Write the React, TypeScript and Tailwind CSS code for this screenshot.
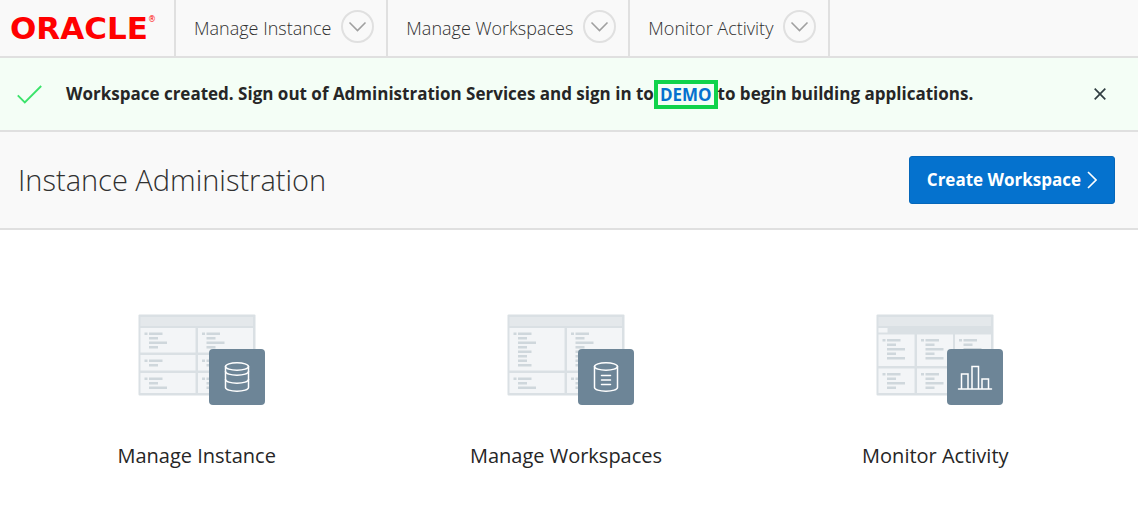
import React from 'react';

type LineSize = 's' | 'm' | 'l';

const LINE_WIDTH: Record<LineSize, number> = { s: 9, m: 13.5, l: 18 };

interface CellProps {
  x: number;
  y: number;
  w: number;
  h: number;
  textY: number;
  lines: string;
}

function Cell({ x, y, w, h, textY, lines }: CellProps) {
  return (
    <g>
      <rect x={x} y={y} width={w} height={h} fill="#f3f5f7" />
      <rect x={x + 4} y={textY} width="3" height="2.5" fill="#cfd7dc" />
      {lines.split('').map((size, i) => (
        <rect
          key={i}
          x={x + 8.5}
          y={textY + i * 4.5}
          width={LINE_WIDTH[size as LineSize]}
          height="2.5"
          fill="#cfd7dc"
        />
      ))}
    </g>
  );
}

function Illustration({ cells, badge, tab }: { cells: CellProps[]; badge: React.ReactNode; tab?: boolean }) {
  return (
    <svg width="138" height="92" viewBox="-10 0 138 92" aria-hidden="true">
      <rect x="0.5" y="0.5" width="117" height="81" rx="1" fill="#dae0e4" />
      <rect x="2.5" y="3" width="112.5" height="9" fill="#e4e8eb" />
      {tab && <rect x="2.5" y="14" width="9" height="4.5" fill="#f3f5f7" />}
      {cells.map((cell, i) => (
        <Cell key={i} {...cell} />
      ))}
      <rect x="71" y="35" width="56" height="56" rx="4" fill="#6d8597" />
      <g fill="none" stroke="#fff" strokeWidth="1.5" strokeLinecap="round">
        {badge}
      </g>
    </svg>
  );
}

const instanceCells: CellProps[] = [2.5, 60].flatMap((x) => [
  { x, y: 14, w: 55, h: 24.5, textY: 18.5, lines: 'msls' },
  { x, y: 41, w: 55, h: 15.5, textY: 45.5, lines: 'ms' },
  { x, y: 59, w: 55, h: 20, textY: 63.5, lines: 'msl' },
]);

const workspaceCells: CellProps[] = [2.5, 60].flatMap((x) => [
  { x, y: 14, w: 55, h: 42.5, textY: 18.5, lines: 'mslsmssm' },
  { x, y: 59, w: 55, h: 20, textY: 63.5, lines: 'msl' },
]);

const activityCells: CellProps[] = [2.5, 41, 79].flatMap((x) => [
  { x, y: 20.5, w: 36, h: 31.5, textY: 25, lines: 'mslsl' },
  { x, y: 54.5, w: 36, h: 24.5, textY: 59, lines: 'msls' },
]);

const databaseIcon = (
  <>
    <ellipse cx="99" cy="52.5" rx="11.5" ry="3.7" />
    <path d="M87.5 52.5v21c0 2 5.1 3.7 11.5 3.7s11.5-1.7 11.5-3.7v-21" />
    <path d="M87.5 57.5c0 2 5.1 3.7 11.5 3.7s11.5-1.7 11.5-3.7M87.5 65.5c0 2 5.1 3.7 11.5 3.7s11.5-1.7 11.5-3.7" />
  </>
);

const workspaceIcon = (
  <>
    <ellipse cx="99" cy="52.5" rx="11.5" ry="3.7" />
    <path d="M87.5 52.5v21c0 2 5.1 3.7 11.5 3.7s11.5-1.7 11.5-3.7v-21" />
    <path d="M94.5 61.5h9M94.5 66h9M94.5 70.5h9" />
  </>
);

const chartIcon = (
  <path d="M82.5 75h33M85.5 75V60h6.5v15M96 75V52.5h6.5V75M106 75V65h6.5v10" />
);

const navItems = ['Manage Instance', 'Manage Workspaces', 'Monitor Activity'];

const cards = [
  { label: 'Manage Instance', cells: instanceCells, badge: databaseIcon, tab: false },
  { label: 'Manage Workspaces', cells: workspaceCells, badge: workspaceIcon, tab: false },
  { label: 'Monitor Activity', cells: activityCells, badge: chartIcon, tab: true },
];

export default function App() {
  return (
    <div className="bg-white font-['Open_Sans','Noto_Sans',sans-serif] text-[#262626]">
      <header className="flex h-[58px] border-b-2 border-[#e0e0e0] bg-[#f9f9f9]">
        <a
          href="#home"
          className="flex w-44 shrink-0 items-center border-r-2 border-[#e0e0e0] pl-2.5 font-['DejaVu_Sans',sans-serif] text-[31px] leading-none font-bold text-[#ff0000]"
        >
          ORACLE
          <span className="self-start pt-4 text-[8px] leading-none font-normal">®</span>
        </a>
        <nav className="flex">
          {navItems.map((label) => (
            <div key={label} className="flex items-center gap-2.5 border-r-2 border-[#e0e0e0] pr-3 pl-[18px]">
              <a href="#nav" className="text-[18px] leading-6 font-light whitespace-nowrap text-[#303030]">
                {label}
              </a>
              <button
                type="button"
                aria-label={`${label} menu`}
                className="mb-1 flex size-[33px] items-center justify-center rounded-full border-2 border-[#e0e0e0]"
              >
                <svg width="19" height="11" viewBox="0 0 19 11" fill="none" stroke="#a0a0a0" strokeWidth="1.6" aria-hidden="true">
                  <path d="M1.5 1.5l8 8 8-8" />
                </svg>
              </button>
            </div>
          ))}
        </nav>
      </header>

      <section role="status" className="flex h-[74px] items-center border-b-2 border-[#e0e0e0] bg-[#f4fef6] pr-8 pl-[17px]">
        <svg width="25" height="19" viewBox="0 0 25 19" fill="none" stroke="#3be36b" strokeWidth="1.9" className="shrink-0" aria-hidden="true">
          <path d="M.8 10.3l7 7L24.2 1" />
        </svg>
        <p className="ml-6 flex items-center text-[17px] leading-6 font-bold whitespace-nowrap">
          Workspace created. Sign out of Administration Services and sign in to
          <a href="#demo" className="border-4 border-[#10d34b] px-0.5 leading-[21px] text-[#0572ce]">
            DEMO
          </a>
          to begin building applications.
        </p>
        <button type="button" aria-label="Close" className="ml-auto">
          <svg width="12" height="12" viewBox="0 0 12 12" fill="none" stroke="#303d42" strokeWidth="1.7" aria-hidden="true">
            <path d="M.7.7l10.6 10.6M11.3.7L.7 11.3" />
          </svg>
        </button>
      </section>

      <section className="flex h-[98px] items-center justify-between border-b-2 border-[#e0e0e0] bg-[#f9f9f9] pr-[23px] pl-[18px]">
        <h1 className="text-[29px] leading-10 font-light text-[#303030]">Instance Administration</h1>
        <button
          type="button"
          className="flex h-12 items-center gap-1.5 rounded-[3px] border border-[#0567ba] bg-[#0572ce] px-[17px] text-[17px] font-bold whitespace-nowrap text-white"
        >
          Create Workspace
          <svg width="10" height="18" viewBox="0 0 10 18" fill="none" stroke="#fff" strokeWidth="1.6" aria-hidden="true">
            <path d="M1 1l8 8-8 8" />
          </svg>
        </button>
      </section>

      <main className="grid grid-cols-3 pt-[84px] pr-[18px] pb-8 pl-3">
        {cards.map(({ label, cells, badge, tab }) => (
          <a key={label} href="#card" className="flex flex-col items-center gap-9">
            <Illustration cells={cells} badge={badge} tab={tab} />
            <span className="text-[20px] leading-7">{label}</span>
          </a>
        ))}
      </main>
    </div>
  );
}
